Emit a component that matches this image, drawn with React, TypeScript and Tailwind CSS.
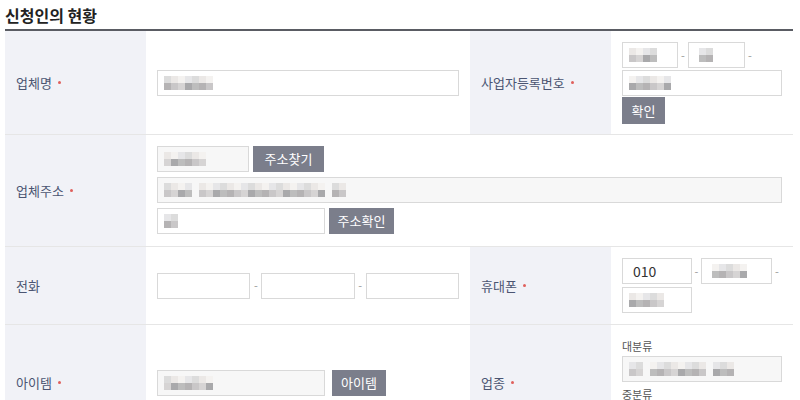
import React from 'react';

const top = ['bg-[#f4f2f0]', 'bg-[#e6e6e8]', 'bg-[#dcdcdc]', 'bg-[#ebe8e6]'];
const bottom = ['bg-[#d6d4d4]', 'bg-[#bdbdbd]', 'bg-[#c9c7c8]', 'bg-[#a9a9ab]', 'bg-[#b5b3b4]'];

// pixelated (masked) value: 'x' = block, '.' = empty block
function Mosaic({ pattern, seed = 1 }: { pattern: string; seed?: number }) {
  const cells = pattern.split('');
  return (
    <div className="flex flex-col">
      {[0, 1].map((r) => (
        <div key={r} className="flex">
          {cells.map((c, i) => {
            if (c === '.') return <div key={i} className="w-[7px] h-[7px]" />;
            const cls = r === 0 ? top[(seed * 3 + i * 5) % top.length] : bottom[(seed * 7 + i * 3) % bottom.length];
            return <div key={i} className={`w-[7px] h-[7px] ${cls}`} />;
          })}
        </div>
      ))}
    </div>
  );
}

function Box({
  className = '',
  readOnly = false,
  children,
}: {
  className?: string;
  readOnly?: boolean;
  children?: React.ReactNode;
}) {
  return (
    <div
      className={`h-[26px] border border-[#d9d9d9] flex items-center px-[6px] text-[13px] text-[#333] ${
        readOnly ? 'bg-[#f7f7f7]' : 'bg-white'
      } ${className}`}
    >
      {children}
    </div>
  );
}

function Btn({ children, className = '' }: { children: React.ReactNode; className?: string }) {
  return (
    <div className={`h-[26px] bg-[#7b7e8b] text-white text-[13px] flex items-center justify-center ${className}`}>
      {children}
    </div>
  );
}

function Dash({ className = 'w-[10px]' }: { className?: string }) {
  return <span className={`${className} text-center text-[11px] text-[#999]`}>-</span>;
}

function Label({ text, req = false }: { text: string; req?: boolean }) {
  return (
    <div className="bg-[#f1f2f7] border-b border-[#e6e6e6] flex items-center px-[11px] text-[13px] text-[#4b5572]">
      {text}
      {req && <span className="ml-[6px] w-[3px] h-[3px] rounded-full bg-[#e0605c]" />}
    </div>
  );
}

function Cell({ children, className = '' }: { children: React.ReactNode; className?: string }) {
  return <div className={`border-b border-[#e6e6e6] px-[11px] ${className}`}>{children}</div>;
}

export default function App() {
  return (
    <div
      className="w-[800px] h-[400px] overflow-hidden bg-white px-[5px]"
      style={{ fontFamily: '"Noto Sans CJK KR", "Noto Sans", sans-serif' }}
    >
      <h2 className="pt-[4px] h-[29px] text-[16px] font-bold text-[#222] leading-[22px]">신청인의 현황</h2>
      <div className="w-[788px] border-t-2 border-[#5a5c63] grid grid-cols-[141px_324px_141px_182px]">
        {/* 업체명 / 사업자등록번호 */}
        <Label text="업체명" req />
        <Cell className="flex items-center">
          <Box className="w-full">
            <Mosaic pattern="xxxxxxx" seed={2} />
          </Box>
        </Cell>
        <Label text="사업자등록번호" req />
        <Cell className="pt-[11px] pb-[10px]">
          <div className="flex items-center">
            <Box className="w-[56px]">
              <Mosaic pattern="xxxx" seed={1} />
            </Box>
            <Dash />
            <Box className="w-[57px] px-[10px]">
              <Mosaic pattern="xx" seed={3} />
            </Box>
            <Dash />
          </div>
          <Box className="w-full mt-[2px]">
            <Mosaic pattern="xxxxxx" seed={4} />
          </Box>
          <Btn className="w-[43px] mt-[1px] h-[27px]">확인</Btn>
        </Cell>

        {/* 업체주소 */}
        <Label text="업체주소" req />
        <Cell className="col-span-3 pt-[11px] pb-[12px] flex flex-col gap-[5px]">
          <div className="flex gap-[4px]">
            <Box className="w-[92px]" readOnly>
              <Mosaic pattern="xxxxxx" seed={5} />
            </Box>
            <Btn className="w-[71px]">주소찾기</Btn>
          </div>
          <Box className="w-full" readOnly>
            <Mosaic pattern="xxxx.xxxxxxxxxxxxxxxxxx.xx" seed={6} />
          </Box>
          <div className="flex gap-[4px]">
            <Box className="w-[168px]">
              <Mosaic pattern="xx" seed={7} />
            </Box>
            <Btn className="w-[65px]">주소확인</Btn>
          </div>
        </Cell>

        {/* 전화 / 휴대폰 */}
        <Label text="전화" />
        <Cell className="flex items-center">
          <Box className="w-[94px]" />
          <Dash className="w-[11px]" />
          <Box className="w-[94px]" />
          <Dash className="w-[11px]" />
          <Box className="w-[94px]" />
        </Cell>
        <Label text="휴대폰" req />
        <Cell className="pt-[11px] pb-[11px] flex flex-col gap-[3px]">
          <div className="flex items-center">
            <Box className="w-[70px] px-[10px] text-[14px] text-[#222]">010</Box>
            <Dash className="w-[9px]" />
            <Box className="w-[71px] px-[10px]">
              <Mosaic pattern="xxxxx" seed={8} />
            </Box>
            <Dash />
          </div>
          <Box className="w-[70px]">
            <Mosaic pattern="xxxxx" seed={9} />
          </Box>
        </Cell>

        {/* 아이템 / 업종 */}
        <Label text="아이템" req />
        <Cell className="flex items-center">
          <Box className="w-[168px]" readOnly>
            <Mosaic pattern="xxxxxxx" seed={10} />
          </Box>
          <Btn className="w-[54px] ml-[7px]">아이템</Btn>
        </Cell>
        <Label text="업종" req />
        <Cell className="pt-[11px] pb-[10px]">
          <div className="text-[11px] text-[#555] leading-[20px]">대분류</div>
          <Box className="w-full" readOnly>
            <Mosaic pattern="xx.xxxxxxxx.xxx" seed={11} />
          </Box>
          <div className="text-[11px] text-[#555] leading-[20px] mt-[2px]">중분류</div>
          <Box className="w-full" readOnly>
            <Mosaic pattern="xxxxxxxxxxx" seed={12} />
          </Box>
        </Cell>
      </div>
    </div>
  );
}
